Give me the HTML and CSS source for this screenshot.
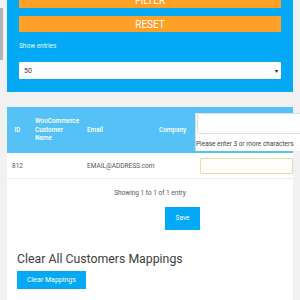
FILE: index.html
```html
<!DOCTYPE html>
<html lang="en">
<head>
    <meta charset="UTF-8">
    <meta name="viewport" content="width=device-width, initial-scale=1.0">
    <title>Customer Mappings</title>
    <link rel="stylesheet" href="styles.css">
</head>
<body>
    <div class="page">
        <div class="rail"></div>
        <div class="main">
            <div class="filters">
                <button class="btn-orange">Filter</button>
                <button class="btn-orange">Reset</button>
                <label class="entries-label">Show entries</label>
                <div class="select">
                    <span>50</span>
                    <span class="arrow">&#9662;</span>
                </div>
            </div>

            <div class="card">
                <div class="table">
                    <div class="thead">
                        <div class="cell center">ID</div>
                        <div class="cell">WooCommerce<br>Customer<br>Name</div>
                        <div class="cell">Email</div>
                        <div class="cell">Company</div>
                    </div>
                    <div class="trow">
                        <div class="cell center">812</div>
                        <div class="cell"></div>
                        <div class="cell">EMAIL@ADDRESS.com</div>
                        <div class="cell"><div class="company-input"></div></div>
                    </div>
                </div>

                <div class="dropdown">
                    <div class="search-box"></div>
                    <p class="hint">Please enter 3 or more characters</p>
                </div>

                <p class="info">Showing 1 to 1 of 1 entry</p>
                <div class="save-row">
                    <button class="btn-blue save">Save</button>
                </div>

                <h2>Clear All Customers Mappings</h2>
                <button class="btn-blue clear">Clear Mappings</button>
            </div>
        </div>
    </div>
</body>
</html>
```

FILE: styles.css
```css
body {
    margin: 0;
    background: #f1f1f1;
    font-family: Roboto, "Liberation Sans", sans-serif;
    overflow: hidden;
}
.page {
    display: flex;
    align-items: flex-start;
}
.rail {
    width: 3px;
    height: 52px;
    margin-top: 8px;
    background: #b3b3b3;
}
.main {
    width: 286px;
    margin-left: 4px;
}
.filters {
    background: #03a9f4;
    margin-top: -8px; /* page is scrolled a little */
    padding: 0 12px 13px;
}
.btn-orange {
    display: block;
    width: 100%;
    height: 16px;
    margin-bottom: 8px;
    border: none;
    background: #ffa028;
    color: #fff;
    font-family: inherit;
    font-size: 10px;
    text-transform: uppercase;
    padding: 0;
}
.entries-label {
    display: block;
    color: #e8f6ff;
    font-size: 6.5px;
    margin-top: 10px;
    height: 20px;
}
.select {
    display: flex;
    justify-content: space-between;
    align-items: center;
    height: 17px;
    background: #fff;
    padding: 0 3px 0 5px;
    font-size: 7px;
    color: #333;
    border-radius: 1px;
}
.select .arrow {
    font-size: 6px;
    color: #222;
}
.card {
    position: relative;
    margin-top: 15px;
    background: #fff;
    padding-bottom: 20px;
}
.thead, .trow {
    display: grid;
    grid-template-columns: 21px 52px 72px 1fr;
    align-items: center;
}
.thead {
    height: 46px;
    background: #56c1f6;
    color: #fff;
    font-size: 6.4px;
    font-weight: 500;
    line-height: 8.5px;
}
.trow {
    height: 25px;
    border-bottom: 1px solid #ececec;
    font-size: 6.5px;
    color: #555;
}
.cell {
    padding-left: 7px;
}
.cell.center {
    padding-left: 0;
    text-align: center;
}
.company-input {
    margin-left: 41px;
    height: 14px;
    border: 1px solid #e3dcae;
    background: #fffef8;
    border-radius: 1px;
}
.dropdown {
    position: absolute;
    left: 188px;
    top: 6px;
    width: 104px;
    background: #fff;
    border-left: 1px solid #dcdcdc;
}
.search-box {
    height: 19px;
    margin-left: 1px;
    border: 1px solid #ddd;
    border-right: none;
    border-radius: 2px 0 0 2px;
}
.hint {
    margin: 0;
    padding: 6px 0 3px;
    font-size: 6.5px;
    color: #444;
    white-space: nowrap;
}
.info {
    margin: 10px 0 0;
    text-align: center;
    font-size: 6.5px;
    color: #555;
}
.save-row {
    padding-left: 158px;
    margin-top: 8px;
}
.btn-blue {
    border: none;
    background: #03a9f4;
    color: #fff;
    font-family: inherit;
    padding: 0;
}
.save {
    width: 35px;
    height: 23px;
    font-size: 6.5px;
}
h2 {
    margin: 22px 0 0 10px;
    font-size: 12.3px;
    font-weight: 400;
    color: #3d3d3d;
}
.clear {
    margin: 5px 0 0 10px;
    width: 69px;
    height: 18px;
    font-size: 7px;
}
```
